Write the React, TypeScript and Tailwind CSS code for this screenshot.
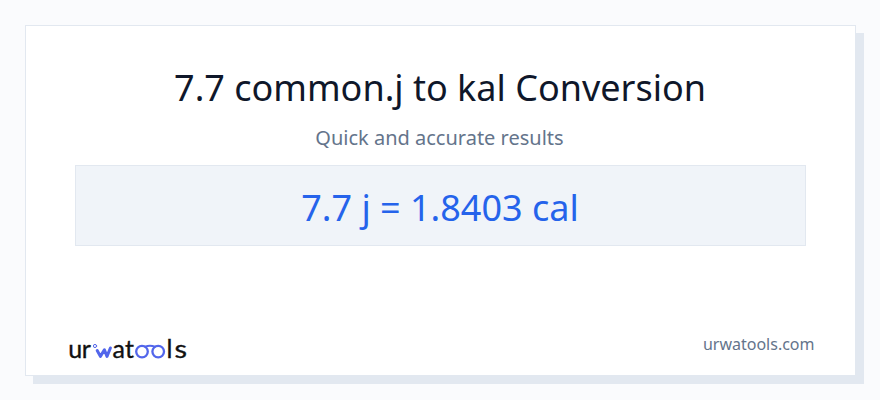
import React from 'react';

function Logo() {
  return (
    <svg width="124" height="36" viewBox="0 -6 124 36" fill="none" role="img" aria-label="urwatools" className="overflow-visible">
      <g fill="#111111" stroke="#111111" strokeWidth="0.35" fontSize="25" className="font-['Lato',sans-serif]">
        <text x="0.2" y="21">u</text>
        <text x="13.8" y="21">r</text>
        <text x="44.6" y="21">a</text>
        <text x="57" y="21">t</text>
        <text x="98.4" y="21">l</text>
        <text x="106.4" y="21" textLength="12.5" lengthAdjust="spacingAndGlyphs">s</text>
      </g>
      <g stroke="#5266eb" strokeLinecap="round" strokeLinejoin="round">
        <circle cx="27" cy="9" r="1.6" strokeWidth="1" />
        <path d="M29.2 13.5L32.4 19.4L36.4 12.8L39 19.4L42.4 11" strokeWidth="3" />
        <circle cx="74" cy="14.6" r="5.8" strokeWidth="2.3" />
        <circle cx="90.2" cy="14.6" r="5.8" strokeWidth="2.3" />
        <path d="M77 9.6Q82 7.8 87 9.6" strokeWidth="1.9" />
      </g>
    </svg>
  );
}

export default function App() {
  return (
    <div className="w-[880px] h-[400px] bg-[#fafbfd] p-[25px] font-['Noto_Sans',sans-serif]">
      <div className="flex flex-col w-[831px] h-[351px] bg-white border border-[#e2e8f0] shadow-[8px_8px_0_#e2e8f0] px-[49px]">
        <h1 className="mt-[36px] pr-px text-center text-[36px] leading-[52px] text-[#0f172a]">
          7.7 common.j to kal Conversion
        </h1>
        <p className="mt-[9px] pr-0.5 text-center text-[20px] leading-[30px] text-[#64748b]">
          Quick and accurate results
        </p>
        <div className="mt-[12px] h-[81px] w-[731px] shrink-0 border border-[#e2e8f0] bg-[#f0f4f9] pt-1 pr-px flex items-center justify-center text-[36px] text-[#2563eb]">
          7.7 j = 1.8403 cal
        </div>
        <div className="mt-[85px] -ml-[7px] -mr-[8.5px] flex items-start justify-between text-[16px] leading-6 text-[#64748b]">
          <Logo />
          <span className="pt-px">urwatools.com</span>
        </div>
      </div>
    </div>
  );
}
